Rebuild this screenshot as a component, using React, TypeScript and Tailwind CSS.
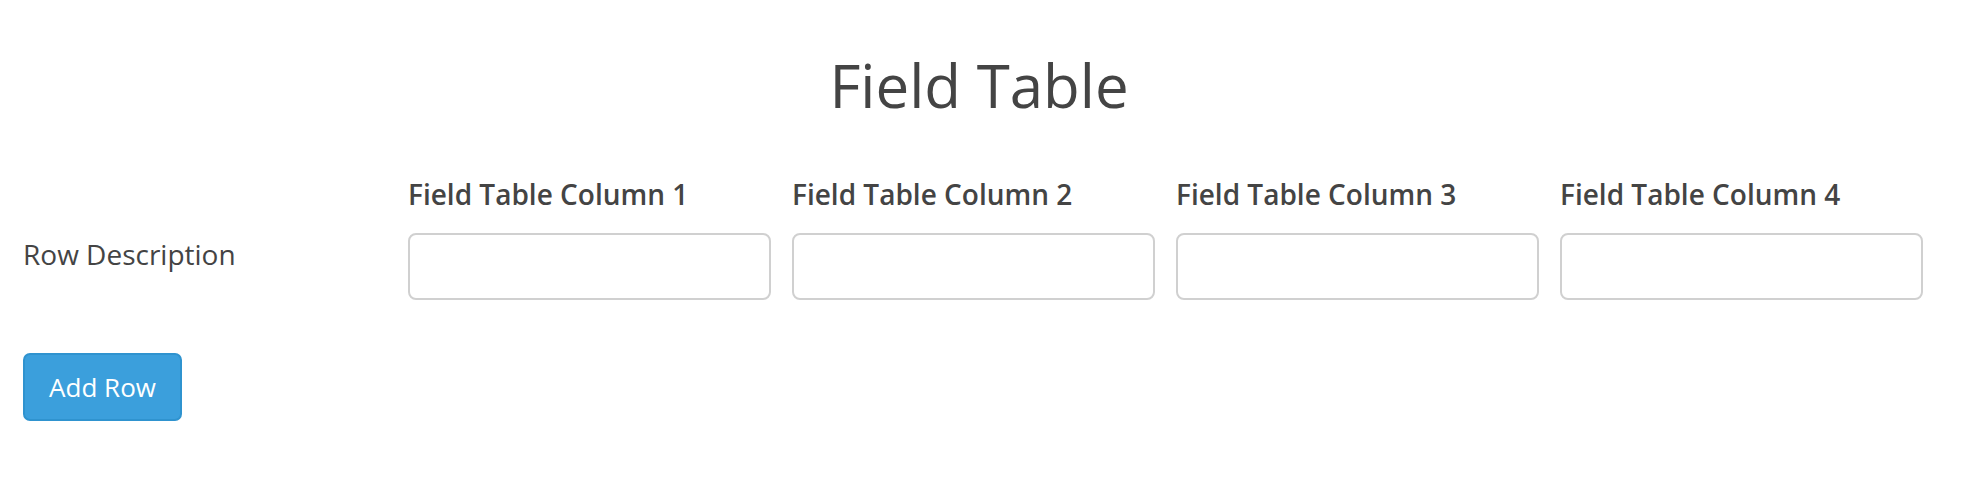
import React from 'react';

const columns = ['Field Table Column 1', 'Field Table Column 2', 'Field Table Column 3', 'Field Table Column 4'];

export default function App() {
  return (
    <div className="min-h-screen bg-white text-[#444] font-['Open_Sans',sans-serif]">
      <h1 className="w-[1958px] pt-[45px] text-center text-[60px] leading-[80px] font-normal">Field Table</h1>

      <div className="w-[1930px] pl-[23px]">
        <div className="mt-[51px] grid grid-cols-[364px_repeat(4,363px)] gap-x-[21px] gap-y-[21px] items-center">
          <div />
          {columns.map((c) => (
            <div key={c} className="text-[28px] font-semibold leading-[36px]">
              {c}
            </div>
          ))}

          <div className="self-start mt-[3px] text-[28px] leading-[36px]">Row Description</div>
          {columns.map((c) => (
            <input
              key={c}
              type="text"
              className="h-[67px] w-full rounded-[8px] border-2 border-[#d0d0d0] bg-white px-3 text-[26px] outline-none"
            />
          ))}
        </div>

        <button className="mt-[53px] h-[68px] w-[159px] rounded-[7px] border-2 border-[#2f93cf] bg-[#3b9fdc] text-[26px] text-white">
          Add Row
        </button>
      </div>
    </div>
  );
}
